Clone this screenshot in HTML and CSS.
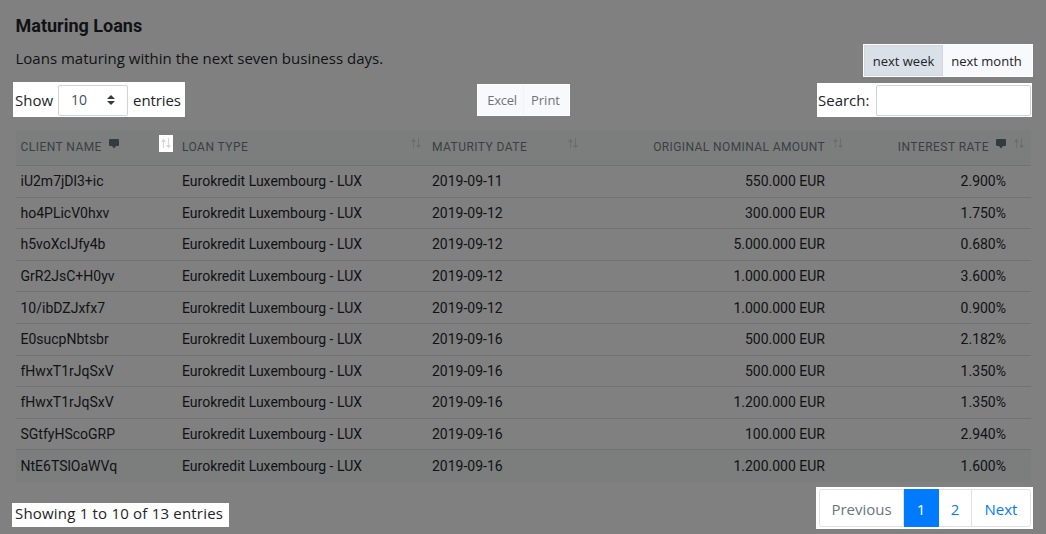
FILE: index.html
```
<!DOCTYPE html>
<html lang="en">
<head>
<meta charset="utf-8">
<title>Maturing Loans</title>
<link rel="stylesheet" href="styles.css">
</head>
<body>
<svg class="sprite" aria-hidden="true">
  <symbol id="sort" viewBox="0 0 10 12"><path d="M2.5 10V2M7.5 0V9" fill="none" stroke="currentColor"/><path d="M0 4L2.5 0.5L5 4ZM5 7L7.5 10.5L10 7Z" fill="currentColor"/></symbol>
  <symbol id="note" viewBox="0 0 10 10"><path d="M1 0H9Q10 0 10 1V6Q10 7 9 7H7L5 9.5L3 7H1Q0 7 0 6V1Q0 0 1 0Z" fill="currentColor"/></symbol>
</svg>
<header class="head">
  <div class="intro">
    <h1 class="title"><span class="t-title">Maturing Loans</span></h1>
    <p class="sub"><span class="t-sub">Loans maturing within the next seven business days.</span></p>
  </div>
  <div class="range">
    <button class="range-btn active">next week</button>
    <button class="range-btn">next month</button>
  </div>
</header>
<section class="tools">
  <div class="length lit"><span class="t-show">Show</span>
    <div class="select"><span>10</span><svg class="caret" viewBox="0 0 8 10"><path d="M0 4L4 0L8 4ZM0 6H8L4 10Z" fill="#343a40"/></svg></div>
    <span class="t-entries">entries</span></div>
  <div class="export lit"><button class="export-btn">Excel</button><button class="export-btn">Print</button></div>
  <label class="search lit"><span class="t-search">Search:</span><input class="search-input" type="text"></label>
</section>
<table class="loans">
  <colgroup><col class="c1"><col class="c2"><col class="c3"><col class="c4"><col class="c5"></colgroup>
  <thead><tr>
    <th><div class="th"><span>CLIENT NAME</span><svg class="note"><use href="#note"/></svg><span class="sort-lit"><svg class="sort"><use href="#sort"/></svg></span></div></th>
    <th><div class="th"><span>LOAN TYPE</span><svg class="sort"><use href="#sort"/></svg></div></th>
    <th><div class="th"><span>MATURITY DATE</span><svg class="sort"><use href="#sort"/></svg></div></th>
    <th><div class="th num-head amount"><span>ORIGINAL NOMINAL AMOUNT</span><svg class="sort"><use href="#sort"/></svg></div></th>
    <th><div class="th num-head rate"><span>INTEREST RATE</span><svg class="note"><use href="#note"/></svg><svg class="sort"><use href="#sort"/></svg></div></th>
  </tr></thead>
  <tbody>
    <tr><td>iU2m7jDl3+ic</td><td>Eurokredit Luxembourg - LUX</td><td>2019-09-11</td><td class="num">550.000 EUR</td><td class="num">2.900%</td></tr>
    <tr><td>ho4PLicV0hxv</td><td>Eurokredit Luxembourg - LUX</td><td>2019-09-12</td><td class="num">300.000 EUR</td><td class="num">1.750%</td></tr>
    <tr><td>h5voXcIJfy4b</td><td>Eurokredit Luxembourg - LUX</td><td>2019-09-12</td><td class="num">5.000.000 EUR</td><td class="num">0.680%</td></tr>
    <tr><td>GrR2JsC+H0yv</td><td>Eurokredit Luxembourg - LUX</td><td>2019-09-12</td><td class="num">1.000.000 EUR</td><td class="num">3.600%</td></tr>
    <tr><td>10/ibDZJxfx7</td><td>Eurokredit Luxembourg - LUX</td><td>2019-09-12</td><td class="num">1.000.000 EUR</td><td class="num">0.900%</td></tr>
    <tr><td>E0sucpNbtsbr</td><td>Eurokredit Luxembourg - LUX</td><td>2019-09-16</td><td class="num">500.000 EUR</td><td class="num">2.182%</td></tr>
    <tr><td>fHwxT1rJqSxV</td><td>Eurokredit Luxembourg - LUX</td><td>2019-09-16</td><td class="num">500.000 EUR</td><td class="num">1.350%</td></tr>
    <tr><td>fHwxT1rJqSxV</td><td>Eurokredit Luxembourg - LUX</td><td>2019-09-16</td><td class="num">1.200.000 EUR</td><td class="num">1.350%</td></tr>
    <tr><td>SGtfyHScoGRP</td><td>Eurokredit Luxembourg - LUX</td><td>2019-09-16</td><td class="num">100.000 EUR</td><td class="num">2.940%</td></tr>
    <tr class="hover"><td>NtE6TSlOaWVq</td><td>Eurokredit Luxembourg - LUX</td><td>2019-09-16</td><td class="num">1.200.000 EUR</td><td class="num">1.600%</td></tr>
  </tbody>
</table>
<footer class="foot">
  <div class="info lit"><span class="t-info">Showing 1 to 10 of 13 entries</span></div>
  <nav class="pages lit"><a class="page prev">Previous</a><a class="page current">1</a><a class="page two">2</a><a class="page next">Next</a></nav>
</footer>
</body>
</html>
```
FILE: styles.css
```
* { box-sizing: border-box; }
body { margin: 0; height: 534px; overflow: hidden; background: #808080; color: #101214; font: 15px/24px "Open Sans", "Noto Sans", sans-serif; }
.sprite { display: none; }
span { white-space: nowrap; }
button, input { font: inherit; margin: 0; }
.lit { background: #fff; color: #212529; }

.head { display: flex; justify-content: space-between; height: 82px; padding: 14px 13px 0 15.5px; }
.title { margin: 0; font: bold 18px/24px Roboto, sans-serif; }
.sub { margin: 8px 0 0; }
.range { display: flex; width: 170px; height: 33px; margin-top: 30px; padding: 1px; background: #fff; }
.range-btn { flex: 1 1 89px; border: 0; padding: 2px 2px 0 0; background: #f8f9fc; color: #212529; font-size: 13px; line-height: 29px; white-space: nowrap; }
.range-btn.active { flex: 0 0 79px; padding: 2px 0 0; background: #dae0e8; border: 1px solid #d0d7df; line-height: 27px; }

.tools { display: flex; justify-content: space-between; align-items: flex-start; height: 48px; padding: 0 14px 0 13px; }
.length { display: flex; align-items: center; width: 172px; height: 35px; padding-left: 2px; }
.select { display: flex; align-items: center; justify-content: space-between; width: 70px; height: 31px; margin: 1px 5px 0; padding: 0 12px; border: 1px solid #ced4da; border-radius: 2px; color: #495057; font-size: 14px; }
.t-entries { letter-spacing: -.1px; }
.caret { width: 8px; height: 10px; }
.export { display: flex; width: 93px; height: 32px; margin: 2px 0 0 45px; padding: 1px; }
.export-btn { flex: 0 0 45px; border: 0; padding: 0 0 0 3px; background: #f8f9fc; color: #6c757d; font-size: 13px; letter-spacing: -.3px; }
.export-btn + .export-btn { flex: 1; padding: 0 2px 0 0; border-left: 1px solid #f0f2f5; letter-spacing: 0; }
.search { display: flex; align-items: center; justify-content: space-between; width: 215px; height: 34px; margin-top: 1px; padding: 0 1px; }
.search-input { width: 155px; height: 31px; border: 1px solid #ced4da; border-radius: 2px; }

.loans { width: 1015px; margin-left: 16px; table-layout: fixed; border-collapse: separate; border-spacing: 0; font: 14px/20px Roboto, sans-serif; }
.c1 { width: 161px; }
.c2 { width: 250px; }
.c3 { width: 157px; }
.c4 { width: 266px; }
.c5 { width: 181px; }
.loans th { height: 36px; padding: 0 5px; background: #7b7e7d; border-bottom: 1px solid #6f7172; color: #3a3f44; font-size: 12px; font-weight: 400; letter-spacing: .45px; }
.loans th:first-child, .loans td:first-child { padding-left: 4.5px; }
.th { display: flex; align-items: center; height: 33px; margin-top: -2px; }
.num-head { justify-content: flex-end; }
.note { width: 10px; height: 10px; margin: -6px 0 0 7px; color: #343a40; }
.sort { width: 10px; height: 12px; margin: -5px 1px 0 auto; color: #6b6e70; }
.num-head .sort { margin: -5px 2px 0 8px; }
.amount span { letter-spacing: .4px; }
.sort-lit { display: flex; width: 14px; height: 17px; margin: -7px -1px 0 auto; padding: 3px 2px 2px; background: #fff; }
.sort-lit .sort { margin: 0; color: #d3d6d9; }
.loans td { height: 31.6px; padding: 0 5px; border-bottom: 1px solid #707273; white-space: nowrap; }
.loans .num { padding-right: 25px; text-align: right; }
.hover td { background: #7b7e7d; border-bottom-color: #7b7e7d; }

.foot { display: flex; justify-content: space-between; align-items: flex-start; padding: 5px 13px 0 12px; }
.info { width: 217px; height: 24px; margin-top: 16px; padding-left: 3px; line-height: 21px; letter-spacing: .2px; }
.pages { display: flex; width: 217px; height: 42px; padding: 2px 2px 2px 3px; }
.page { border: 1px solid #dee2e6; border-left: 0; color: #007bff; line-height: 38px; text-align: center; }
.prev { width: 85px; border-left: 1px solid #dee2e6; border-radius: 3px 0 0 3px; color: #6c757d; }
.current { width: 35px; background: #007bff; border-color: #007bff; color: #fff; }
.two { width: 33px; }
.next { width: 59px; border-radius: 0 3px 3px 0; }
```
